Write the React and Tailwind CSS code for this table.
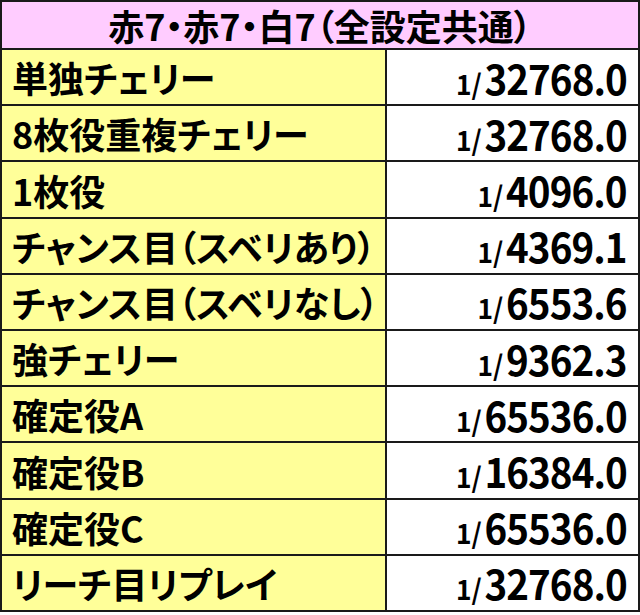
import React from 'react';

const rows = [
  ['単独チェリー', '32768.0'],
  ['8枚役重複チェリー', '32768.0'],
  ['1枚役', '4096.0'],
  ['チャンス目（スベリあり）', '4369.1'],
  ['チャンス目（スベリなし）', '6553.6'],
  ['強チェリー', '9362.3'],
  ['確定役A', '65536.0'],
  ['確定役B', '16384.0'],
  ['確定役C', '65536.0'],
  ['リーチ目リプレイ', '32768.0'],
];

const font = { fontFamily: '"Noto Sans CJK JP", "Noto Sans", sans-serif' };

export default function App() {
  return (
    <div className="w-[640px] h-[615px] bg-white" style={font}>
      <div className="w-[640px] h-[612px] border-2 border-[#1a1a1a] flex flex-col font-bold text-black [font-feature-settings:'palt']">
        <div className="h-[46px] shrink-0 bg-[#ffccff] flex items-center justify-center text-[36px] leading-none">
          赤7・赤7・白7（全設定共通）
        </div>
        {rows.map(([name, value]) => (
          <div key={name} className="flex-1 flex border-t-2 border-[#1a1a1a]">
            <div className="w-[385px] shrink-0 bg-[#ffff99] border-r-2 border-[#1a1a1a] flex items-center pl-[10px] text-[36px] leading-none whitespace-nowrap">
              {name}
            </div>
            <div className="flex-1 flex items-center justify-end pr-[11px]">
              <span className="inline-flex items-baseline leading-none scale-x-[0.94] origin-right">
                <span className="text-[28px] mr-[3px]">1/</span>
                <span className="text-[41px] tracking-[-1px]">{value}</span>
              </span>
            </div>
          </div>
        ))}
      </div>
    </div>
  );
}
